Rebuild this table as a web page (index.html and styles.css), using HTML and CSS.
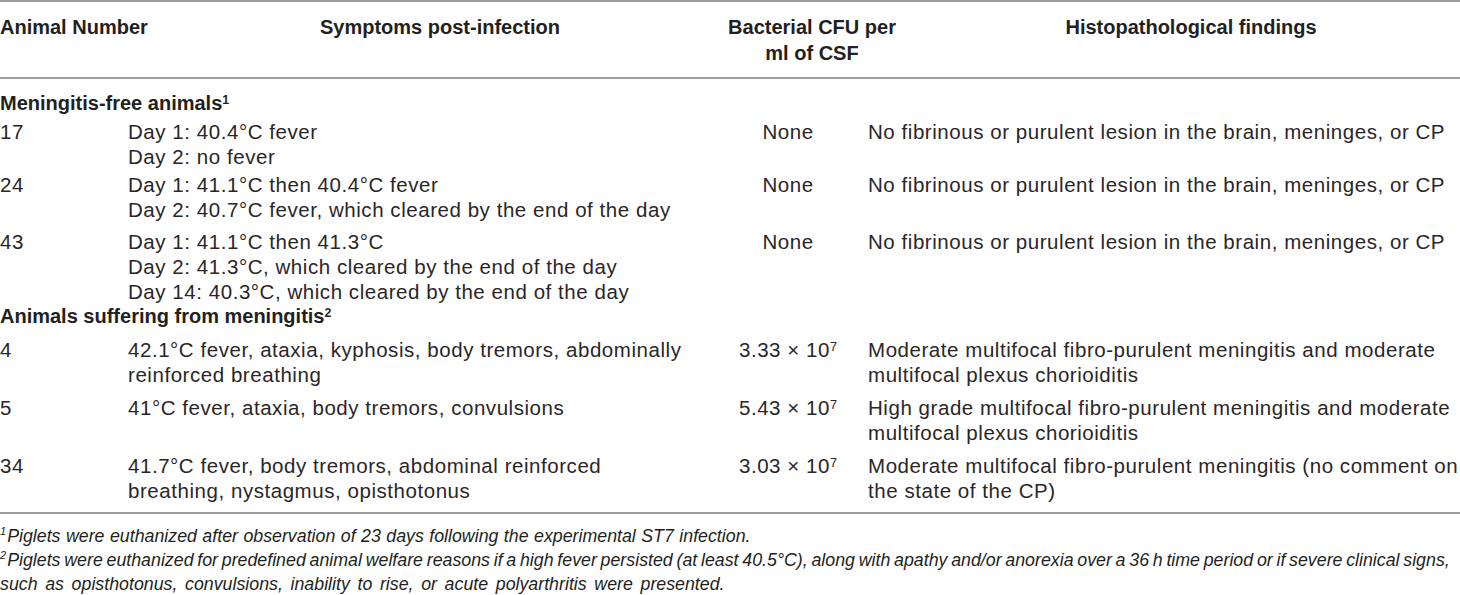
FILE: index.html
```html
<!DOCTYPE html>
<html>
<head>
<meta charset="utf-8">
<link rel="stylesheet" href="styles.css">
</head>
<body>
<table class="tbl">
  <colgroup>
    <col class="c1">
    <col class="c2">
    <col class="c3">
    <col class="c4">
  </colgroup>
  <thead>
    <tr>
      <th class="h1"><div class="hc">Animal Number</div></th>
      <th class="h2"><div class="hc">Symptoms post-infection</div></th>
      <th class="h3"><div class="hc"><span>Bacterial CFU per</span><span>ml of CSF</span></div></th>
      <th class="h4"><div class="hc">Histopathological findings</div></th>
    </tr>
  </thead>
  <tbody class="ga">
    <tr class="grp"><td colspan="4">Meningitis-free animals<sup>1</sup></td></tr>
    <tr>
      <td>17</td>
      <td>Day 1: 40.4°C fever<br>Day 2: no fever</td>
      <td class="num">None</td>
      <td class="fd">No fibrinous or purulent lesion in the brain, meninges, or CP</td>
    </tr>
    <tr>
      <td>24</td>
      <td>Day 1: 41.1°C then 40.4°C fever<br>Day 2: 40.7°C fever, which cleared by the end of the day</td>
      <td class="num">None</td>
      <td class="fd">No fibrinous or purulent lesion in the brain, meninges, or CP</td>
    </tr>
    <tr class="spaced">
      <td>43</td>
      <td>Day 1: 41.1°C then 41.3°C<br>Day 2: 41.3°C, which cleared by the end of the day<br>Day 14: 40.3°C, which cleared by the end of the day</td>
      <td class="num">None</td>
      <td class="fd">No fibrinous or purulent lesion in the brain, meninges, or CP</td>
    </tr>
  </tbody>
  <tbody class="gb">
    <tr class="grp"><td colspan="4">Animals suffering from meningitis<sup>2</sup></td></tr>
    <tr>
      <td>4</td>
      <td>42.1°C fever, ataxia, kyphosis, body tremors, abdominally<br>reinforced breathing</td>
      <td class="num">3.33 × 10<sup>7</sup></td>
      <td class="fd">Moderate multifocal fibro-purulent meningitis and moderate<br>multifocal plexus chorioiditis</td>
    </tr>
    <tr>
      <td>5</td>
      <td>41°C fever, ataxia, body tremors, convulsions</td>
      <td class="num">5.43 × 10<sup>7</sup></td>
      <td class="fd">High grade multifocal fibro-purulent meningitis and moderate<br>multifocal plexus chorioiditis</td>
    </tr>
    <tr class="last">
      <td>34</td>
      <td>41.7°C fever, body tremors, abdominal reinforced<br>breathing, nystagmus, opisthotonus</td>
      <td class="num">3.03 × 10<sup>7</sup></td>
      <td class="fd">Moderate multifocal fibro-purulent meningitis (no comment on<br>the state of the CP)</td>
    </tr>
  </tbody>
</table>
<div class="notes">
  <p class="n1"><sup>1</sup>Piglets were euthanized after observation of 23 days following the experimental ST7 infection.</p>
  <p class="n2"><span class="tight"><sup>2</sup>Piglets were euthanized for predefined animal welfare reasons if a high fever persisted (at least 40.5°C), along with apathy and/or anorexia over a 36 h time period or if severe clinical signs,</span><br><span class="loose">such as opisthotonus, convulsions, inability to rise, or acute polyarthritis were presented.</span></p>
</div>
</body>
</html>
```
FILE: styles.css
```css
html, body {
  margin: 0;
  padding: 0;
  background: #fff;
}
body {
  font-family: "Liberation Sans", Arial, sans-serif;
  color: #231f20;
  width: 1460px;
  overflow: hidden;
}
.tbl {
  width: 1460px;
  border-collapse: collapse;
  table-layout: fixed;
}
.c1 { width: 128px; }
.c2 { width: 588px; }
.c3 { width: 144px; }
.c4 { width: 600px; }

.tbl th, .tbl td {
  padding: 0;
  vertical-align: top;
  text-align: left;
  white-space: nowrap;
}

/* header */
.tbl thead th {
  font-weight: bold;
  font-size: 20px;
  line-height: 26px;
  border-top: 2px solid #9d9d9d;
  border-bottom: 2px solid #9d9d9d;
  padding-top: 12px;
  padding-bottom: 11px;
  height: 52px;
}
.hc {
  display: flex;
  flex-direction: column;
}
.h2 .hc, .h3 .hc, .h4 .hc {
  align-items: center;
}
.tbl th.h2 { padding-left: 36px; }
.tbl th.h3 { padding-left: 48px; }
.tbl th.h4 { padding-left: 62px; }

/* body */
.tbl tbody td {
  font-size: 20.5px;
  letter-spacing: 0.55px;
  line-height: 25px;
  color: #2a2627;
}
.tbl .grp td {
  font-weight: bold;
  font-size: 20px;
  letter-spacing: 0;
  color: #231f20;
}
.ga .grp td { padding-top: 12px; }
.ga td { padding-top: 3px; }
.ga .spaced td { padding-top: 7px; }
.gb .grp td { padding-top: 0; padding-bottom: 0; }
.gb td { padding-top: 8px; }
.tbl .fd { padding-left: 8px; }
.tbl .num { text-align: center; }
.tbl sup {
  font-size: 0.62em;
  line-height: 0;
  vertical-align: 0.5em;
  letter-spacing: 0;
}
.tbl .last td {
  border-bottom: 2px solid #9d9d9d;
  padding-bottom: 9px;
}

/* footnotes */
.notes {
  padding-top: 10px;
  font-style: italic;
  font-size: 17.8px;
  line-height: 24px;
  white-space: nowrap;
}
.notes p { margin: 0; }
.n1 { word-spacing: 0.5px; }
.tight { word-spacing: -1.2px; }
.loose { word-spacing: 2.7px; }
.notes sup {
  font-size: 11px;
  line-height: 0;
  vertical-align: 7px;
  margin-right: 1px;
}
```
